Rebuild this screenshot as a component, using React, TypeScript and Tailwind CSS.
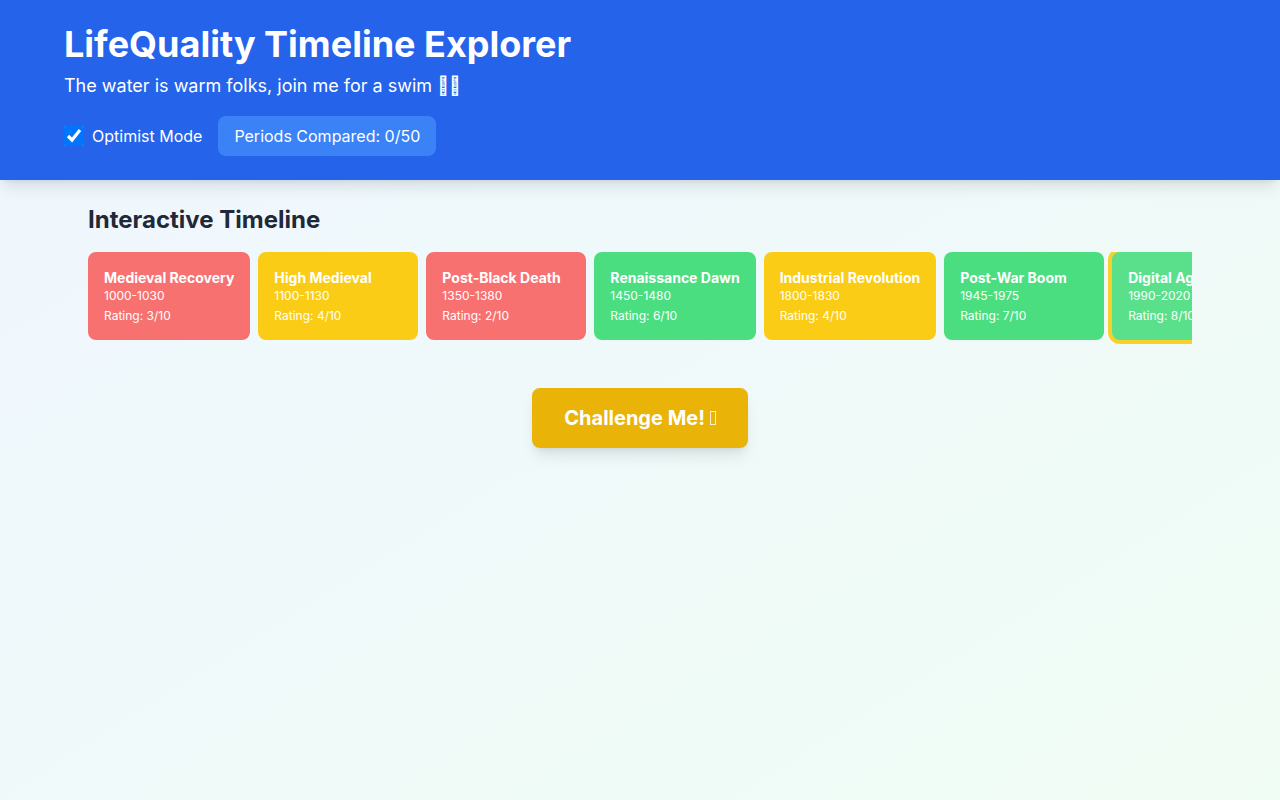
import { useState } from "react";
import clsx from "clsx";

type Period = {
  name: string;
  years: string;
  rating: number;
};

const TOTAL_COMPARISONS = 50;

const periods: Period[] = [
  { name: "Medieval Recovery", years: "1000-1030", rating: 3 },
  { name: "High Medieval", years: "1100-1130", rating: 4 },
  { name: "Post-Black Death", years: "1350-1380", rating: 2 },
  { name: "Renaissance Dawn", years: "1450-1480", rating: 6 },
  { name: "Industrial Revolution", years: "1800-1830", rating: 4 },
  { name: "Post-War Boom", years: "1945-1975", rating: 7 },
  { name: "Digital Age", years: "1990-2020", rating: 8 },
];

function ratingColor(rating: number) {
  if (rating >= 6) return "bg-[#4ade80]";
  if (rating >= 4) return "bg-[#facc15]";
  return "bg-[#f87171]";
}

function PeriodCard({
  period,
  selected,
  onSelect,
}: {
  period: Period;
  selected: boolean;
  onSelect: () => void;
}) {
  return (
    <button
      type="button"
      onClick={onSelect}
      className={clsx(
        "min-w-40 shrink-0 cursor-pointer rounded-lg p-4 text-left text-white",
        ratingColor(period.rating),
        selected && "opacity-90 ring-4 ring-[#facc15]",
      )}
    >
      <h3 className="text-sm font-bold whitespace-nowrap">{period.name}</h3>
      <p className="text-xs">{period.years}</p>
      <p className="mt-1 text-xs">Rating: {period.rating}/10</p>
    </button>
  );
}

export default function App() {
  const [optimist, setOptimist] = useState(true);
  const [compared, setCompared] = useState(0);
  const [selected, setSelected] = useState("Digital Age");

  const challenge = () => {
    const next = periods[Math.floor(Math.random() * periods.length)];
    setSelected(next.name);
    setCompared((count) => Math.min(count + 1, TOTAL_COMPARISONS));
  };

  return (
    <div className="min-h-screen bg-linear-to-br/srgb from-[#eff6ff] to-[#f0fdf4] font-[Inter,sans-serif]">
      <header className="bg-[#2563eb] py-6 text-white shadow-lg">
        <div className="mx-auto max-w-6xl">
          <h1 className="text-4xl font-bold">LifeQuality Timeline Explorer</h1>
          <p className="mt-2 text-lg">
            The water is warm folks, join me for a swim {"\uF8FF\uF8FF"}
          </p>
          <div className="mt-4 flex items-center gap-4">
            <label className="flex items-center gap-2">
              <input
                type="checkbox"
                checked={optimist}
                onChange={(e) => setOptimist(e.target.checked)}
                className="h-5 w-5"
              />
              <span>Optimist Mode</span>
            </label>
            <div className="rounded-lg bg-[#3b82f6] px-4 py-2">
              Periods Compared: {compared}/{TOTAL_COMPARISONS}
            </div>
          </div>
        </div>
      </header>

      <main className="mx-auto max-w-6xl p-6">
        <section className="mb-8">
          <h2 className="mb-4 text-2xl font-bold text-[#1f2937]">
            Interactive Timeline
          </h2>
          <div className="flex gap-2 overflow-x-auto pb-4">
            {periods.map((period) => (
              <PeriodCard
                key={period.name}
                period={period}
                selected={period.name === selected}
                onSelect={() => setSelected(period.name)}
              />
            ))}
          </div>
        </section>

        <div className="text-center">
          <button
            type="button"
            onClick={challenge}
            className="cursor-pointer rounded-lg bg-[#eab308] px-8 py-4 text-xl font-bold text-white shadow-lg"
          >
            Challenge Me!{" "}
            <span
              aria-hidden="true"
              className="inline-block h-3.5 w-1.5 border border-white/80 align-baseline"
            />
          </button>
        </div>
      </main>
    </div>
  );
}
